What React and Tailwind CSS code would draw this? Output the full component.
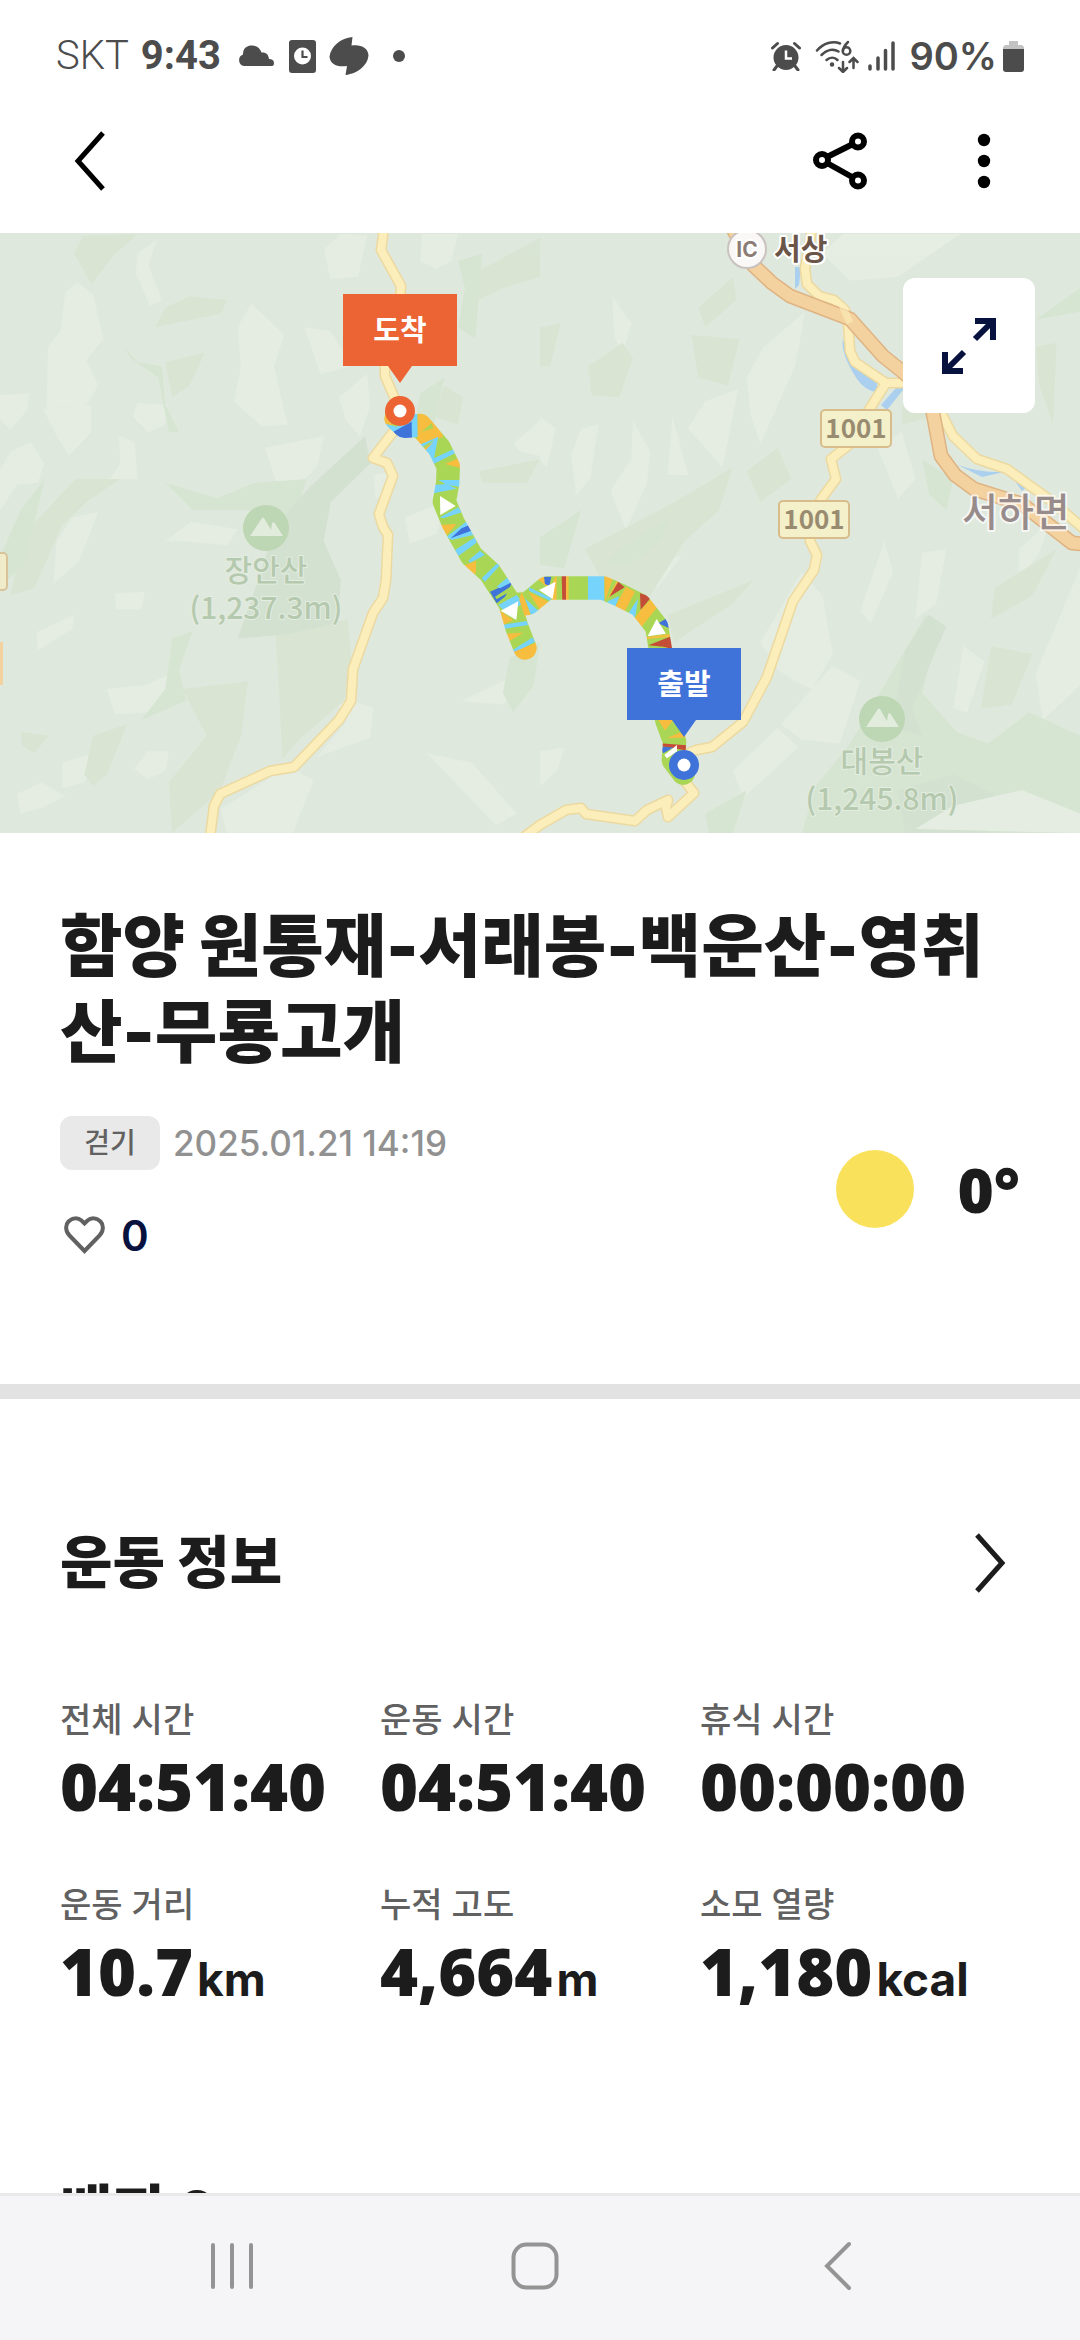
const stats = [
  { label: '전체 시간', value: '04:51:40' },
  { label: '운동 시간', value: '04:51:40' },
  { label: '휴식 시간', value: '00:00:00' },
  { label: '운동 거리', value: '10.7', unit: 'km' },
  { label: '누적 고도', value: '4,664', unit: 'm' },
  { label: '소모 열량', value: '1,180', unit: 'kcal' }
];

const StatusBar = () => (
  <div className="flex h-[112px] shrink-0 items-center justify-between pr-[56px] pl-[56px] text-[#4c4c4c]">
    <div className="flex items-center font-['Roboto',sans-serif] text-[40px] leading-[48px]">
      <span className="font-light">SKT</span>
      <span className="ml-3 font-bold">9:43</span>
      <svg className="ml-4 h-[22px] w-[38px]" viewBox="0 0 38 22" fill="currentColor">
        <path d="M7 21a6 6 0 0 1-1-11.500C6 3 10 .5 15 .5c5 0 8 2.500 9.500 7 4-.5 7 1.500 7.500 6.500 3 0 5 1.500 5 4s-1 3-3 3z" />
      </svg>
      <svg className="ml-[14px] h-[33px] w-[27px]" viewBox="0 0 27 33">
        <rect width="27" height="33" rx="3" fill="currentColor" />
        <circle cx="13.500" cy="16" r="8.500" fill="#fff" />
        <path d="M13.500 10.500v6.500h5" fill="none" stroke="currentColor" strokeWidth="2.200" />
      </svg>
      <svg className="ml-[13px] h-[38px] w-[40px]" viewBox="0 0 40 38" fill="currentColor">
        <path d="M23.500 0 22.500 8.500C32 7 39 11 39.500 18 39 28 29 36.500 16.500 38l1.500-9C8 30.500 1 27 .5 19.500 2 9 12 1 23.500 0z" />
      </svg>
      <span className="ml-6 h-3 w-3 rounded-full bg-[#4c4c4c]" />
    </div>
    <div className="flex items-center font-['Inter',sans-serif] text-[38px] leading-[48px] font-semibold">
      <svg className="h-[30px] w-[30px]" viewBox="0 0 30 30">
        <circle cx="15" cy="16.500" r="12.500" fill="currentColor" />
        <path d="M1.500 7 6.500 2.500M28.500 7l-5-4.500M6 25l-3 4M24 25l3 4" stroke="currentColor" strokeWidth="3" strokeLinecap="round" />
        <path d="M15 9.500v8h6" fill="none" stroke="#fff" strokeWidth="2.500" />
      </svg>
      <svg className="ml-[14px] h-[33px] w-[44px]" viewBox="0 0 44 33" fill="none" stroke="currentColor" strokeWidth="2.500" strokeLinecap="round">
        <path d="M2 10.500C8.500 3 18 .5 25 3.500" />
        <path d="M6.500 15c5.500-5.500 12-6.500 17-3.500" />
        <path d="M11.500 20c3.500-3 8-3 11 0" />
        <circle cx="17" cy="24.500" r="1" fill="currentColor" />
        <path d="M33 2c-3 3-5 6-5 9" />
        <circle cx="31.500" cy="11" r="3.800" />
        <path d="M28 22v9.500M24 28l4 4 4-4M38.500 28v-9.500M34.500 22l4-4 4 4" />
      </svg>
      <svg className="ml-[9px] h-[30px] w-[27px]" viewBox="0 0 27 30" stroke="currentColor" strokeWidth="3.500" strokeLinecap="round">
        <path d="M2 25v3M10 17v11M17.500 9.500V28M25 2v26" />
      </svg>
      <span className="ml-[14px]">90%</span>
      <svg className="ml-[6px] h-[33px] w-[21px]" viewBox="0 0 21 33">
        <path d="M6 1h9v4h4l2 2v4H0V7l2-2h4z" fill="#c3c3c3" />
        <path d="M0 9h21v20q0 3-3 3H3q-3 0-3-3z" fill="currentColor" />
      </svg>
    </div>
  </div>
);

const Header = () => (
  <header className="flex h-[121px] shrink-0 items-center pr-[53px] pb-6 pl-[60px]">
    <button aria-label="뒤로" className="flex h-20 w-[60px] items-center justify-center">
      <svg className="h-[60px] w-[32px]" viewBox="0 0 32 60" fill="none" stroke="#000" strokeWidth="5">
        <path d="M29 2 4 30l25 28" />
      </svg>
    </button>
    <button aria-label="공유" className="ml-auto flex h-20 w-20 items-center justify-center">
      <svg className="h-[58px] w-[54px]" viewBox="0 0 54 58" fill="none" stroke="#000" strokeWidth="6">
        <circle cx="9" cy="28" r="6" />
        <circle cx="45" cy="9.500" r="6" />
        <circle cx="45" cy="48.500" r="6" />
        <path d="m14 25 26-13M14 31l26 14.500" />
      </svg>
    </button>
    <button aria-label="더보기" className="ml-[61px] flex h-20 w-[86px] items-center justify-center">
      <svg className="h-[56px] w-[14px]" viewBox="0 0 14 56">
        <circle cx="7" cy="7" r="6.200" />
        <circle cx="7" cy="28" r="6.200" />
        <circle cx="7" cy="49" r="6.200" />
      </svg>
    </button>
  </header>
);

// shaded relief under the roads, west and east halves of the map
const reliefWest = [
  ['#e7efe4', '190,160 225,135 270,165 300,280 250,335 285,400 250,450 135,458 140,300 175,260'],
  ['#e7efe4', '730,190 825,270 795,350 835,500 760,505 680,440 700,350 690,250'],
  ['#e7efe4', '400,60 455,25 430,90 470,180 435,195 395,110'],
  ['#e7efe4', '0,425 85,420 80,460 30,515 0,485'],
  ['#e7efe4', '125,460 265,450 265,520 200,580 165,530'],
  ['#e7efe4', '30,570 90,545 128,600 110,650 50,655 0,720 0,620'],
  ['#e7efe4', '345,530 390,545 400,640 320,640 350,600'],
  ['#e7efe4', '400,445 485,450 480,500 430,520 385,480'],
  ['#e7efe4', '480,800 555,750 690,770 660,810 540,800'],
  ['#e7efe4', '210,740 285,725 230,850 155,910 165,800'],
  ['#e7efe4', '310,1180 420,1170 500,1140 525,1170 440,1240 335,1245'],
  ['#e7efe4', '180,1370 285,1340 245,1420 180,1435'],
  ['#e7efe4', '390,1385 430,1340 490,1340 480,1390 430,1412'],
  ['#e7efe4', '50,1450 120,1420 190,1455 120,1485 60,1500'],
  ['#e7efe4', '640,1490 800,1400 860,1390 910,1415 850,1550 660,1550'],
  ['#e7efe4', '960,1190 1085,1230 1075,1305 920,1355 1010,1260'],
  ['#e7efe4', '940,50 990,10 1065,15 1040,120 960,125'],
  ['#e7efe4', '885,250 960,260 1020,350 930,370'],
  ['#e7efe4', '1225,10 1330,10 1310,80 1265,100 1220,80'],
  ['#e7efe4', '985,430 1065,370 1075,450 1045,530 1005,490'],
  ['#e7efe4', '1085,630 1150,620 1140,680 1090,690'],
  ['#e7efe4', '1175,740 1285,700 1270,780 1190,805'],
  ['#e7efe4', '770,560 940,530 920,610 830,690 800,640'],
  ['#e7efe4', '1340,1210 1460,1160 1540,1150 1460,1220'],
  ['#e7efe4', '1240,1345 1370,1370 1500,1500 1440,1530'],
  ['#e7efe4', '1490,550 1568,490 1568,580 1510,570'],
  ['#e7efe4', '335,935 420,930 410,975 335,975'],
  ['#e7efe4', '105,1035 215,990 210,1025 110,1080'],
  ['#d8e4d2', '240,15 400,10 330,65 265,140 215,60'],
  ['#d8e4d2', '480,200 550,170 660,180 640,215 450,250'],
  ['#d8e4d2', '480,340 595,315 550,400 500,430'],
  ['#d8e4d2', '220,640 350,640 250,700 180,760 100,920 30,940 70,780'],
  ['#d8e4d2', '530,1180 720,1160 700,1300 640,1440 500,1550 490,1420 600,1300'],
  ['#d8e4d2', '800,1040 1010,1000 1020,1100 1000,1210 880,1300 820,1360 810,1180'],
  ['#d8e4d2', '60,1290 140,1300 100,1345 65,1325'],
  ['#d8e4d2', '270,1300 370,1270 310,1400 270,1430 245,1400'],
  ['#d8e4d2', '1380,110 1568,20 1568,120 1460,150 1390,180'],
  ['#d8e4d2', '1290,400 1345,430 1330,500 1260,480'],
  ['#d8e4d2', '1390,620 1568,590 1530,650 1400,650'],
  ['#d5e5d1', '480,650 630,690 740,650 890,640 850,760 720,720 560,720'],
  ['#d5e5d1', '360,300 400,340 470,350 480,450 520,520 490,520 460,380 380,330'],
  ['#d5e5d1', '0,840 60,720 130,640 70,860 20,900'],
  ['#d5e5d1', '500,1050 560,1030 520,1130 540,1210 410,1260 480,1180'],
  ['#d5e5d1', '1330,80 1400,60 1380,280 1330,250 1350,150'],
  ['#d5e5d1', '1220,420 1290,380 1260,500 1210,470'],
  ['#d5e5d1', '1480,1100 1568,1060 1550,1170 1490,1240 1460,1190'],
  ['#d1e0cf', '800,760 900,660 1060,530 1075,600 960,700 940,800 990,900 980,1010 830,1040 690,1050 750,900']
];

const reliefEast = [
  ['#e7efe4', '600,380 650,300 770,210 740,350 640,550 610,470'],
  ['#e7efe4', '430,510 480,440 575,410 530,610 480,560'],
  ['#e7efe4', '210,170 265,240 240,320 215,270'],
  ['#e7efe4', '270,490 320,570 310,650 250,770 205,670 265,590'],
  ['#e7efe4', '385,480 430,630 370,630'],
  ['#e7efe4', '0,480 45,510 20,610 0,590'],
  ['#e7efe4', '120,510 170,500 145,640 105,680 90,580'],
  ['#e7efe4', '640,1060 760,880 820,940 850,1090 790,1180 740,1160 690,1130'],
  ['#e7efe4', '1000,800 1025,880 960,1010 930,980'],
  ['#e7efe4', '1110,830 1180,820 1150,960 1090,1000'],
  ['#e7efe4', '1230,1070 1290,1110 1240,1240 1200,1230'],
  ['#e7efe4', '1440,1140 1568,870 1568,1170 1460,1260'],
  ['#e7efe4', '300,840 410,840 340,920'],
  ['#e7efe4', '980,560 1050,520 1090,640 1040,690'],
  ['#e7efe4', '1390,820 1480,750 1450,830 1390,900'],
  ['#e7efe4', '0,1340 70,1330 50,1390 0,1430'],
  ['#e7efe4', '700,1270 850,1120 930,1160 870,1320 760,1310'],
  ['#e7efe4', '880,10 1220,10 1040,120 900,130 820,60'],
  ['#e7efe4', '560,1390 690,1280 750,1330 590,1460'],
  ['#e7efe4', '1360,1370 1440,1390 1400,1470 1350,1460'],
  ['#d8e4d2', '140,350 240,290 270,330 230,430 150,425'],
  ['#d8e4d2', '440,270 580,280 545,400 460,380'],
  ['#d8e4d2', '0,250 60,240 30,350 0,350'],
  ['#d8e4d2', '130,820 390,700 560,610 520,720 420,800 320,940 210,950'],
  ['#d8e4d2', '370,990 620,900 560,960 390,1060'],
  ['#d8e4d2', '460,200 560,120 570,180 480,250'],
  ['#d8e4d2', '1060,350 1190,470 1050,500'],
  ['#d8e4d2', '1310,1070 1430,1090 1370,1220 1280,1230'],
  ['#d8e4d2', '1320,920 1500,820 1430,940 1310,1000'],
  ['#d8e4d2', '1440,300 1500,290 1490,500 1450,400'],
  ['#d8e4d2', '600,620 690,560 730,640 640,700'],
  ['#d5e5d1', '0,790 120,720 70,870 0,860'],
  ['#d5e5d1', '250,810 370,740 360,790 260,860 190,860'],
  ['#d5e5d1', '1440,230 1568,150 1568,210'],
  ['#d5e5d1', '900,1320 1120,990 1160,1010 1110,1190 1210,1290 1300,1320 1420,1240 1568,1300 1568,1550 760,1550 800,1430'],
  ['#d5e5d1', '480,1500 600,1440 560,1550 490,1550'],
  ['#d5e5d1', '1110,590 1200,640 1180,720 1130,680'],
  ['#d1e0cf', '1060,1080 1130,990 1180,1020 1150,1080 1080,1230 1110,1300 1020,1280'],
  ['#d1e0cf', '1040,1440 1200,1400 1320,1450 1300,1550 1060,1550'],
  ['#e7efe4', '1090,1540 1200,1480 1400,1440 1568,1500 1568,1550']
];

const localRoads = [
  '384,-4 381,17 401,53 398,90 385,133 385,143 395,166 400,190 373,225 387,230 393,243 379,281 383,294 388,302 386,347 383,365 373,380 353,436 351,468 339,487 294,534 270,538 220,561 214,573 210,604',
  '524,604 540,592 566,577 581,575 586,581 635,588 647,577 668,567 666,575 668,584 694,560 683,546',
  '684,522 696,517 712,514 743,489 767,444 793,368 814,337 817,322 810,308 810,285 822,265 836,246 831,226 850,211 867,180 886,150 930,150',
  '886,150 855,129 850,118 848,90 845,77 834,67 819,63 807,51 805,36 812,-4',
  '936,170 953,203 977,226 1007,236 1050,267 1084,296'
];

const highway = '733,-4 753,32 772,50 790,63 850,86 883,123 903,139 926,160 933,180 941,223 955,242 974,256 1022,271 1072,310 1084,311';

// pace coloured pieces of the track
const pace = [
  ['#f6bd3f', '150,380 190,440 170,450 150,430'],
  ['#76d3fb', '160,430 200,440 262,395 264,470 200,480'],
  ['#3f73da', '190,455 245,425 246,480 205,480'],
  ['#f6bd3f', '263,395 310,410 340,470 250,500 263,470'],
  ['#a9d755', '275,455 305,430 310,445'],
  ['#76d3fb', '255,500 325,470 310,545 270,520'],
  ['#f6bd3f', '265,515 310,487 275,522'],
  ['#a9d755', '265,508 315,478 290,500'],
  ['#76d3fb', '300,540 370,508 375,520 310,552'],
  ['#f6bd3f', '345,552 395,530 395,565'],
  ['#76d3fb', '325,600 395,600 395,622 350,614'],
  ['#76d3fb', '310,615 350,612 380,626 310,640'],
  ['#76d3fb', '330,712 385,682 395,697 340,715'],
  ['#f6bd3f', '330,735 380,732 350,765'],
  ['#76d3fb', '350,770 415,720 430,765 365,780'],
  ['#3f73da', '362,775 395,745 418,735 424,752'],
  ['#76d3fb', '375,810 435,772 440,788 385,828'],
  ['#76d3fb', '415,842 450,812 465,825 420,848'],
  ['#f6bd3f', '395,860 438,842 438,880 410,885'],
  ['#76d3fb', '455,895 502,850 508,858 465,905'],
  ['#3f73da', '480,935 548,905 525,950 500,970'],
  ['#76d3fb', '500,920 535,890 548,905 510,925'],
  ['#a9d755', '495,950 545,918 548,930 500,958'],
  ['#76d3fb', '505,975 560,945 580,970 530,1000'],
  ['#f6bd3f', '500,985 550,1020 510,1040'],
  ['#f6bd3f', '575,935 605,1010 585,1010 568,960'],
  ['#76d3fb', '585,955 628,995 605,1010'],
  ['#f6bd3f', '595,935 655,965 630,990'],
  ['#76d3fb', '597,922 665,955 660,962 597,932'],
  ['#f6bd3f', '620,895 645,890 655,925'],
  ['#3f73da', '642,890 664,890 658,918 645,912'],
  ['#f6bd3f', '665,915 680,880 680,965 665,965'],
  ['#c44d38', '695,880 708,880 708,965 697,965'],
  ['#f6bd3f', '708,880 716,880 716,965 708,965'],
  ['#76d3fb', '774,880 823,880 823,965 774,965'],
  ['#f6bd3f', '823,880 850,890 825,965'],
  ['#f6bd3f', '830,960 865,895 860,930'],
  ['#c44d38', '838,950 865,905 884,922'],
  ['#76d3fb', '830,965 868,948 855,985'],
  ['#f6bd3f', '850,990 888,920 915,935 882,998'],
  ['#76d3fb', '895,1000 925,955 915,1012'],
  ['#c44d38', '930,940 965,950 932,990'],
  ['#f6bd3f', '932,990 965,955 985,978 935,1040 910,1020'],
  ['#3f73da', '985,1030 1018,1010 1018,1045'],
  ['#f6bd3f', '945,1072 1020,1062 1020,1070 945,1078'],
  ['#c44d38', '955,1096 1020,1070 1040,1110 1000,1100'],
  ['#f6bd3f', '985,1320 1030,1320 1005,1352'],
  ['#f6bd3f', '1010,1375 1050,1358 1070,1372'],
  ['#c44d38', '990,1390 1070,1396 1070,1412 990,1398'],
  ['#3f73da', '990,1400 1030,1403 1000,1420'],
  ['#76d3fb', '515,1035 590,1023 595,1035 520,1047'],
  ['#f6bd3f', '515,1062 580,1058 535,1085'],
  ['#76d3fb', '545,1112 608,1072 615,1085 555,1118'],
  ['#f6bd3f', '545,1118 625,1085 625,1145 560,1145']
];

const Pin = ({ x, y, color, label }) => (
  <g transform={`translate(${x} ${y})`}>
    <circle r="15" fill={color} />
    <circle r="6.500" fill="#fff" />
    <path d="M-57-117H57v72H12L0-28-12-45h-45z" fill={color} />
    <text y="-70" textAnchor="middle" fill="#fff" className="text-[29px] font-bold">{label}</text>
  </g>
);

const Peak = ({ x, y, name, height }) => (
  <g transform={`translate(${x} ${y})`}>
    <circle r="23" fill="#bdd6b3" />
    <path d="M-16 8-4-10q1-1 2 0L5 2l1-7 2-1L17 8z" fill="#e2ecdd" />
    <text fill="#b5c9ae" stroke="#e4ede1" strokeWidth="2" paintOrder="stroke" textAnchor="middle" className="text-[30px] font-medium">
      <tspan x="0" y="53">{name}</tspan>
      <tspan x="0" y="91">{height}</tspan>
    </text>
  </g>
);

const RoadBadge = ({ x, y }) => (
  <g transform={`translate(${x} ${y})`}>
    <rect x="-35" y="-18" width="70" height="37" rx="4" fill="#f3f0ca" stroke="#d8bd8b" strokeWidth="2" />
    <text y="10" textAnchor="middle" fill="#998b70" className="text-[26px] font-bold">1001</text>
  </g>
);

const Relief = ({ shapes, transform }) => (
  <g transform={transform} opacity="0.85">
    {shapes.map(([fill, points]) => <polygon key={points} fill={fill} points={points} />)}
  </g>
);

const RouteMap = () => (
  <div className="relative h-[600px] shrink-0 overflow-hidden bg-[#dfe8dd]">
    <svg
      className="h-full w-full font-['Noto_Sans_CJK_KR',sans-serif]"
      viewBox="0 0 1080 600"
      preserveAspectRatio="xMidYMid slice"
    >
      <rect width="1080" height="600" fill="#dfe8dd" />
      <Relief shapes={reliefWest} transform="translate(0 -3) scale(.3444 .389)" />
      <Relief shapes={reliefEast} transform="translate(540 -3) scale(.3444 .389)" />

      <g fill="#abcfee">
        <path d="M795 34h6l-2 18-4 4z" />
        <path d="M843 106q-3 14 14 40 8 12 20 13v-14l-24-16q-8-10-10-23zM881 172l6 5 16-20v-10zM958 232q22 8 46 7l-22 5zM1012 244l18 8-8 6z" />
      </g>

      <g fill="none" strokeLinejoin="round">
        {localRoads.map((points) => <polyline key={points} points={points} stroke="#ecd9a0" strokeWidth="11" />)}
        {localRoads.map((points) => <polyline key={points} points={points} stroke="#fbeebb" strokeWidth="8" />)}
        <polyline points={highway} stroke="#dfb382" strokeWidth="15" />
        <polyline points={highway} stroke="#f3d29f" strokeWidth="12" />
        <path d="m842 72 8 18" stroke="#fbeebb" strokeWidth="7" opacity="0.6" />
      </g>
      <rect x="-20" y="320" width="27" height="37" rx="4" fill="#f0ecca" stroke="#d8c39b" strokeWidth="2" />
      <path d="M0 409h3v43H0z" fill="#f3d29f" />

      <RoadBadge x={856} y={195} />
      <RoadBadge x={814} y={286} />
      <circle cx="747" cy="16" r="19" fill="#faf8f7" stroke="#c9c2be" strokeWidth="2" />
      <g stroke="#fff" strokeWidth="4" paintOrder="stroke" strokeLinejoin="round">
        <text x="747" y="24" textAnchor="middle" fill="#8b7d75" className="font-['Inter',sans-serif] text-[21px] font-bold">IC</text>
        <text x="774" y="27" fill="#6b5549" className="text-[29px] font-bold">서상</text>
        <text x="962" y="293" fill="#978b8b" strokeOpacity="0.7" className="text-[39px] font-medium">서하면</text>
      </g>
      <Peak x={266} y={295} name="장안산" height="(1,237.3m)" />
      <Peak x={882} y={486} name="대봉산" height="(1,245.8m)" />

      <g transform="translate(330 47) scale(.3333)">
        <mask id="track" maskUnits="userSpaceOnUse" x="0" y="0" width="1300" height="1600">
          <g fill="none" stroke="#fff" strokeWidth="70" strokeLinecap="round" strokeLinejoin="round">
            <path d="M198 415l26 24 46-3 58 68 27 56-2 50-10 55 27 65 55 98 55 50 60 92 20 70 25 64" />
            <path d="M545 975l50-5 55-46h170l50 22 60 30 50 64 15 90L1010 1320 1034 1385 1030 1440 1060 1480" />
          </g>
        </mask>
        <g mask="url(#track)">
          <rect width="1300" height="1600" fill="#a9d755" />
          {pace.map(([fill, points]) => <polygon key={points} fill={fill} points={points} />)}
        </g>
        <path d="M330 648l47 30-46 27zM512 992l53-28-6 56zM627 930l50-25-9 52zM980 1017l28 44-55 8zM1003 1425l38-30v20l-30 20z" fill="#fff" />
      </g>

      <Pin x={400} y={178} color="#ec6334" label="도착" />
      <Pin x={684} y={532} color="#3f73da" label="출발" />
    </svg>
    <button aria-label="지도 확대" className="absolute top-[45px] right-[45px] flex h-[135px] w-[132px] items-center justify-center rounded-xl bg-white">
      <svg className="h-[56px] w-[54px]" viewBox="0 0 54 56" fill="none" stroke="#07123f" strokeWidth="6">
        <path d="M33 3h18v19M51 3 33 21M3 34v19h18M3 53l19-19" />
      </svg>
    </button>
  </div>
);

const Summary = () => (
  <section className="shrink-0 px-[60px] pt-[70px] pb-[122px]">
    <h1 className="text-[68px] leading-[86px] font-black break-all">함양 원통재-서래봉-백운산-영취산-무룡고개</h1>
    <div className="mt-[41px] flex items-center justify-between">
      <div>
        <div className="flex items-center gap-[13px]">
          <span className="flex h-[54px] w-[100px] items-center justify-center rounded-xl bg-[#e9e9e9] text-[28px] font-medium text-[#616161]">걷기</span>
          <time className="text-[35px] leading-[54px] font-medium text-[#919191]">2025.01.21 14:19</time>
        </div>
        <button aria-label="좋아요 0" className="mt-[38px] flex h-[54px] items-center gap-4 pl-1">
          <svg className="h-[38px] w-[41px]" viewBox="0 0 41 38" fill="none" stroke="#616161" strokeWidth="4">
            <path d="M20.500 35 5.500 19.500C1.500 15.500 1 9 4.500 5.500 8.500 1.500 14 1.500 17.500 4.500l3 3 3-3c3.500-3 9-3 13 1 3.500 3.500 3 10-1 14z" />
          </svg>
          <span className="text-[42px] font-semibold text-[#07123f]">0</span>
        </button>
      </div>
      <div className="flex items-center gap-[44px]">
        <span className="h-[78px] w-[78px] rounded-full bg-[#fae15b]" />
        <span className="font-['Open_Sans',sans-serif] text-[62px] leading-[72px] font-extrabold">0°</span>
      </div>
    </div>
  </section>
);

const Stat = ({ label, value, unit }) => (
  <div>
    <dt className="text-[34px] leading-[54px] font-medium text-[#616161]">{label}</dt>
    <dd className="flex items-baseline gap-1 leading-[78px]">
      <span className="font-['Open_Sans',sans-serif] text-[65px] font-extrabold">{value}</span>
      {unit && <span className="text-[46px] font-bold">{unit}</span>}
    </dd>
  </div>
);

const NavBar = () => (
  <nav className="flex h-[147px] shrink-0 items-center justify-between border-t-[3px] border-[#e9e9ea] bg-[#f5f5f7] pr-[202px] pb-1 pl-[192px]">
    <button aria-label="최근 앱" className="flex h-20 w-20 items-center justify-center">
      <svg className="h-[48px] w-[44px]" viewBox="0 0 44 48" stroke="#949494" strokeWidth="4" strokeLinecap="round">
        <path d="M3 3v42M22 3v42M41 3v42" />
      </svg>
    </button>
    <button aria-label="홈" className="flex h-20 w-20 items-center justify-center">
      <svg className="h-[48px] w-[48px]" viewBox="0 0 48 48" fill="none" stroke="#949494" strokeWidth="4">
        <rect x="2.500" y="2.500" width="43" height="43" rx="13" />
      </svg>
    </button>
    <button aria-label="이전" className="flex h-20 w-20 items-center justify-center">
      <svg className="h-[50px] w-[28px]" viewBox="0 0 28 50" fill="none" stroke="#949494" strokeWidth="4" strokeLinecap="round">
        <path d="M25 3 3 25l22 22" />
      </svg>
    </button>
  </nav>
);

export default function App() {
  return (
    <div className="flex h-screen flex-col overflow-hidden bg-white font-['Inter','Noto_Sans_CJK_KR',sans-serif] text-[#1c1c1c]">
      <StatusBar />
      <Header />
      <main className="flex min-h-0 flex-1 flex-col overflow-hidden">
        <RouteMap />
        <Summary />
        <section className="shrink-0 border-t-[15px] border-[#e2e2e2] px-[60px] pt-[124px]">
          <div className="flex items-center justify-between">
            <h2 className="text-[57px] leading-[80px] font-extrabold">운동 정보</h2>
            <button aria-label="운동 정보 더보기" className="flex h-20 w-[60px] items-center justify-center">
              <svg className="h-[60px] w-[32px]" viewBox="0 0 32 60" fill="none" stroke="#1c1c1c" strokeWidth="5">
                <path d="m3 2 25 28L3 58" />
              </svg>
            </button>
          </div>
          <dl className="mt-[90px] grid grid-cols-3 gap-y-[53px]">
            {stats.map((stat) => <Stat key={stat.label} {...stat} />)}
          </dl>
          <h2 className="mt-[154px] text-[57px] leading-[80px] font-extrabold">배지 0</h2>
        </section>
      </main>
      <NavBar />
    </div>
  );
}
